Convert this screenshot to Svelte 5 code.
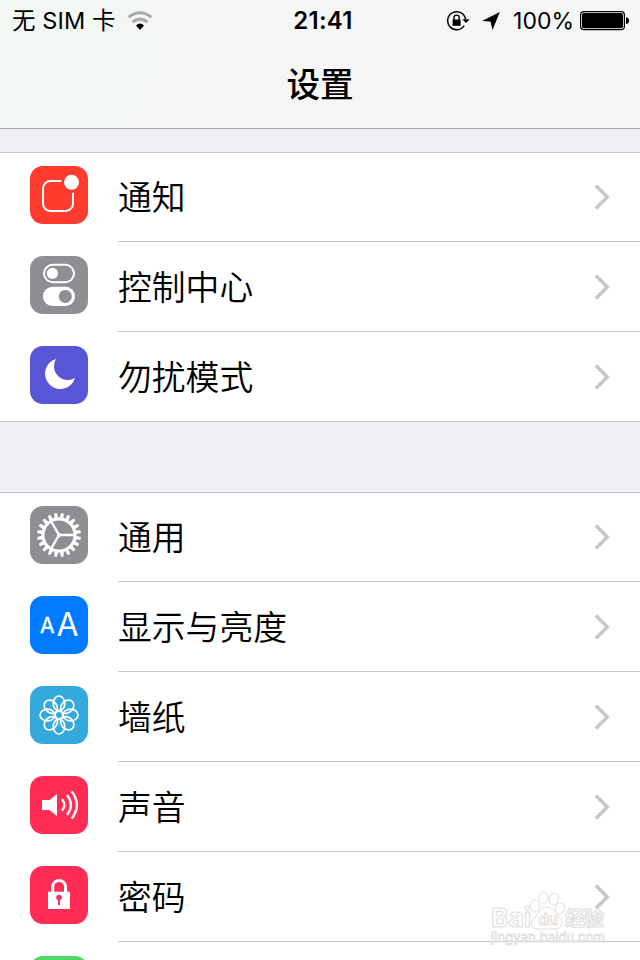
<script lang="ts">
	type Item = { icon: string; label: string; color: string };

	const groups: Item[][] = [
		[
			{ icon: 'notifications', label: '通知', color: '#ff3b30' },
			{ icon: 'control', label: '控制中心', color: '#8e8e93' },
			{ icon: 'moon', label: '勿扰模式', color: '#5856d6' }
		],
		[
			{ icon: 'gear', label: '通用', color: '#8e8e93' },
			{ icon: 'display', label: '显示与亮度', color: '#007aff' },
			{ icon: 'wallpaper', label: '墙纸', color: '#34aadc' },
			{ icon: 'sound', label: '声音', color: '#ff2d55' },
			{ icon: 'lock', label: '密码', color: '#ff2d55' },
			{ icon: '', label: '', color: '#4cd964' }
		]
	];

	const teeth = Array.from({ length: 20 }, (_, i) => 9 + i * 18);
	const petals = Array.from({ length: 8 }, (_, i) => i * 45);
</script>

<div class="screen">
	<header>
		<div class="status">
			<div class="side">
				<span class="carrier">无 SIM 卡</span>
				<svg class="wifi" width="26" height="20" viewBox="0 0 26 20" fill="none">
					<path d="M1.5 6.2Q13-2.8 24.5 6.2" stroke="#aaa" stroke-width="3" />
					<path d="M5.6 11Q13 5.2 20.4 11" stroke="#aaa" stroke-width="3" />
					<path d="M9 14.6Q13 10.6 17 14.6L13 19z" fill="#000" />
				</svg>
			</div>
			<span class="time">21:41</span>
			<div class="side right">
				<svg class="rotation" width="24" height="22" viewBox="0 0 24 22" fill="none">
					<path d="M18.2 15.6A9 9 0 1 1 19.5 9" stroke="#000" stroke-width="1.5" />
					<path d="M16.3 9.2h7.4L20 13z" fill="#000" />
					<path d="M6.6 9.5h8v6.3h-8z" fill="#000" />
					<path d="M8 10V7.7a2.6 2.6 0 0 1 5.2 0V10" stroke="#000" stroke-width="1.4" />
				</svg>
				<svg class="location" width="20" height="20" viewBox="0 0 20 20">
					<path d="M18.8 1L11.5 19L9.5 10.5L1 10z" />
				</svg>
				<span class="percent">100%</span>
				<svg class="battery" width="50" height="20" viewBox="0 0 50 20">
					<rect x=".6" y=".6" width="43.8" height="18" rx="3.4" fill="none" stroke="#000" stroke-width="1.2" />
					<rect x="2" y="2" width="41" height="15.2" rx="2" />
					<path d="M46 6.3q3 .4 3 3.4t-3 3.4z" />
				</svg>
			</div>
		</div>
		<h1>设置</h1>
	</header>

	<main>
		{#each groups as group}
			<ul>
				{#each group as item}
					<li>
						<svg class="icon" width="58" height="58" viewBox="0 0 58 58" fill="none">
							<rect width="58" height="58" rx="13" fill={item.color} />
							{#if item.icon === 'notifications'}
								<path d="M31.5 15H20.5A7.5 7.5 0 0 0 13 22.5v15A7.5 7.5 0 0 0 20.5 45h15a7.5 7.5 0 0 0 7.5-7.5V26.7" stroke="#fff" stroke-width="2" />
								<circle cx="41.5" cy="16.3" r="7.5" fill="#fff" />
							{:else if item.icon === 'control'}
								<rect x="14" y="8.8" width="30" height="17.4" rx="8.7" stroke="#fff" stroke-width="2" />
								<circle cx="22.4" cy="17.4" r="5.6" fill="#fff" />
								<rect x="13" y="30.8" width="32" height="19.2" rx="9.6" fill="#fff" />
								<circle cx="35.3" cy="40.4" r="6.5" fill={item.color} />
							{:else if item.icon === 'moon'}
								<path d="M26 13A15.3 15.3 0 1 0 45 32A13.8 13.8 0 0 1 26 13z" fill="#fff" />
							{:else if item.icon === 'gear'}
								<circle cx="29" cy="29" r="16" stroke="#fff" stroke-width="3" />
								{#each teeth as angle}
									<path d="M26.9 12.600L27.700 7h2.600L31.100 12.600z" fill="#fff" transform="rotate({angle} 29 29)" />
								{/each}
								<path d="M29 29H44M29 29L21.500 16M29 29L21.500 42" stroke="#fff" stroke-width="2.400" />
								<circle cx="29" cy="29" r="2" fill="#fff" />
							{:else if item.icon === 'display'}
								<text class="small-a" x="17.3" y="37">A</text>
								<text class="big-a" x="37.6" y="40">A</text>
							{:else if item.icon === 'wallpaper'}
								{#each petals as angle}
									<ellipse cx="29" cy="17.4" rx="5.8" ry="7.4" stroke="#fff" stroke-width="1.7" transform="rotate({angle} 29 29)" />
								{/each}
								<circle cx="29" cy="29" r="4" stroke="#fff" stroke-width="2" />
							{:else if item.icon === 'sound'}
								<path d="M12 24h7.5L27 18v22l-7.5-6H12z" fill="#fff" />
								<path d="M32 23.2Q36.8 29 32 34.8M37 19Q44.8 29 37 39M41.7 15.4Q52 29 41.7 42.6" stroke="#fff" stroke-width="2.4" />
							{:else if item.icon === 'lock'}
								<path d="M18 25.7h22V43H18z" fill="#fff" />
								<path d="M22.7 26.5V20.8a6.4 6.4 0 0 1 12.8 0V26.5" stroke="#fff" stroke-width="3" />
								<circle cx="29" cy="31.5" r="2.8" fill={item.color} />
								<path d="M29 32v7" stroke={item.color} stroke-width="2" />
							{/if}
						</svg>
						<div class="row">
							<span>{item.label}</span>
							<svg class="chevron" width="18" height="28" viewBox="0 0 18 28" fill="none">
								<path d="M1.8 2.5L13.3 14L1.8 25.5" stroke="#c7c7cc" stroke-width="3.6" />
							</svg>
						</div>
					</li>
				{/each}
			</ul>
		{/each}
	</main>

	<svg class="watermark" width="120" height="60" viewBox="0 0 120 60">
		<text class="logo" x="2" y="38" textLength="40" lengthAdjust="spacingAndGlyphs">Bai</text>
		<ellipse cx="46" cy="17" rx="4.5" ry="6" />
		<ellipse cx="54.5" cy="9" rx="4.5" ry="6" />
		<ellipse cx="65" cy="10" rx="4.5" ry="6" transform="rotate(12 65 10)" />
		<ellipse cx="71" cy="19.5" rx="4.5" ry="5.5" transform="rotate(20 71 19.5)" />
		<path d="M58 18c8 0 9 7 13 11s2 11-5 11H49c-7 0-9-7-4-11s5-11 13-11z" />
		<text class="du" x="49" y="36">du</text>
		<text class="cn" x="76" y="37" textLength="39">经验</text>
		<text class="url" x="2" y="53" textLength="114">jingyan.baidu.com</text>
	</svg>
</div>

<style>
	:global(body) {
		margin: 0;
	}

	.screen {
		position: relative;
		width: 640px;
		height: 960px;
		overflow: hidden;
		background: #efeff4;
		font-family: Inter, 'Noto Sans CJK SC', sans-serif;
		color: #000;
	}

	header {
		box-sizing: border-box;
		height: 129px;
		border-bottom: 1px solid #a7a7ab;
		background: radial-gradient(circle at 60px 50px, #f2f8f3, transparent 200px), #f6f6f7;
	}

	.status {
		display: grid;
		grid-template-columns: 1fr auto 1fr;
		height: 41px;
		align-items: center;
		padding: 0 10px 0 12px;
		font-size: 24px;
		line-height: 40px;
	}

	.side {
		display: flex;
		align-items: center;
	}

	.right {
		justify-content: flex-end;
	}

	.carrier {
		font-size: 23.5px;
		letter-spacing: 0.1px;
	}

	.wifi {
		margin-left: 11px;
	}

	.time {
		font-weight: 600;
		letter-spacing: 0.3px;
		margin-left: 4px;
	}

	.percent {
		font-size: 23px;
	}

	.location {
		margin: 0 12px 0 11px;
	}

	.battery {
		margin-left: 6px;
	}

	h1 {
		margin: 0;
		text-align: center;
		font-size: 33.6px;
		font-weight: 500;
		line-height: 88px;
	}

	ul {
		list-style: none;
		margin: 23px 0 0;
		padding: 0;
		background: #fff;
		border-bottom: 1px solid #c8c7cc;
	}

	ul + ul {
		margin-top: 70px;
	}

	li {
		box-sizing: border-box;
		display: flex;
		height: 90px;
		padding-left: 30px;
	}

	li:first-child {
		border-top: 1px solid #c8c7cc;
	}

	li:last-child {
		height: 89px;
	}

	.icon {
		flex: none;
		margin: 14px 30px 0 0;
	}

	li:first-child .icon {
		margin-top: 13px;
	}

	.row {
		flex: 1;
		display: flex;
		align-items: center;
		justify-content: space-between;
		box-sizing: border-box;
		padding-right: 28px;
		border-bottom: 1px solid #c8c7cc;
		font-family: 'Noto Sans CJK SC', sans-serif;
		font-size: 33.8px;
		font-weight: 350;
		line-height: 50px;
	}

	.row span {
		padding-bottom: 2px;
	}

	li:last-child .row {
		border-bottom: none;
	}

	.small-a,
	.big-a {
		fill: #fff;
		text-anchor: middle;
		font-size: 21px;
		font-weight: 400;
	}

	.small-a {
		stroke: #fff;
		stroke-width: 0.4;
	}

	.big-a {
		font-size: 32px;
	}

	.watermark {
		position: absolute;
		left: 489px;
		top: 889px;
		fill: #fff;
		stroke: #dedede;
		stroke-width: 1;
	}

	.logo,
	.du {
		font-size: 26px;
		font-weight: 700;
	}

	.du {
		font-size: 16px;
	}

	.cn {
		font-size: 20px;
		font-weight: 700;
	}

	.url {
		font-size: 13px;
		stroke-width: 0.8;
	}
</style>
